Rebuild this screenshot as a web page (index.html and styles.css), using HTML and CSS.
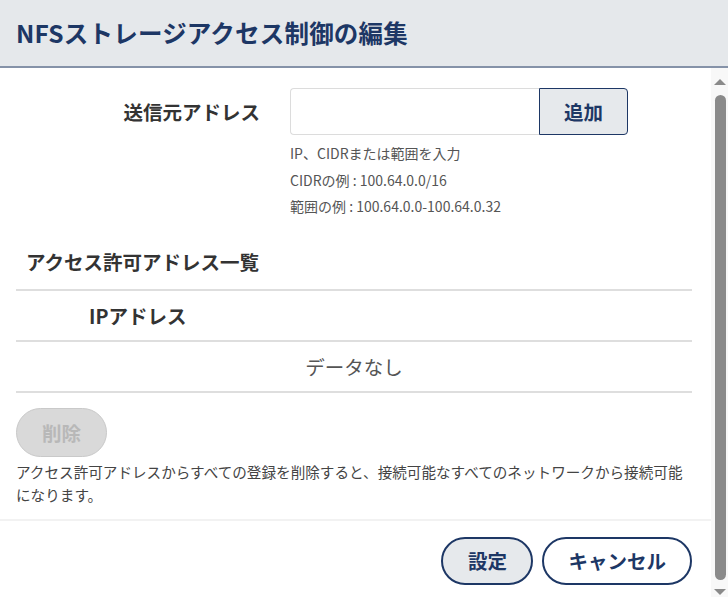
FILE: index.html
```html
<!DOCTYPE html>
<html lang="ja">
<head>
    <meta charset="UTF-8">
    <meta name="viewport" content="width=device-width, initial-scale=1.0">
    <title>NFSストレージアクセス制御の編集</title>
    <link rel="stylesheet" href="styles.css">
</head>
<body>
    <div class="dialog">
        <header class="dialog-header">
            <h1 class="dialog-title">NFSストレージアクセス制御の編集</h1>
        </header>

        <div class="dialog-main">
            <div class="dialog-scroll">
                <div class="dialog-body">
                    <div class="form-row">
                        <label class="form-label" for="srcAddr">送信元アドレス</label>
                        <div class="form-field">
                            <div class="input-group">
                                <input type="text" class="text-input" id="srcAddr">
                                <button class="btn-add">追加</button>
                            </div>
                            <ul class="help-list">
                                <li>IP、CIDRまたは範囲を入力</li>
                                <li>CIDRの例 : 100.64.0.0/16</li>
                                <li>範囲の例 : 100.64.0.0-100.64.0.32</li>
                            </ul>
                        </div>
                    </div>

                    <h2 class="section-title">アクセス許可アドレス一覧</h2>

                    <table class="addr-table">
                        <thead>
                            <tr><th>IPアドレス</th></tr>
                        </thead>
                        <tbody>
                            <tr><td class="empty">データなし</td></tr>
                        </tbody>
                    </table>

                    <button class="btn-delete" disabled>削除</button>
                    <p class="note">アクセス許可アドレスからすべての登録を削除すると、接続可能なすべてのネットワークから接続可能になります。</p>
                </div>

                <div class="dialog-footer">
                    <button class="btn-pill btn-primary">設定</button>
                    <button class="btn-pill">キャンセル</button>
                </div>
            </div>

            <!-- scrollbar of the dialog body -->
            <div class="scrollbar">
                <span class="scroll-arrow scroll-arrow-up"></span>
                <span class="scroll-thumb"></span>
                <span class="scroll-arrow scroll-arrow-down"></span>
            </div>
        </div>
    </div>
</body>
</html>
```

FILE: styles.css
```css
* {
    margin: 0;
    padding: 0;
    box-sizing: border-box;
}

body {
    font-family: 'Noto Sans CJK JP', 'Noto Sans', sans-serif;
    color: #333;
    background: #fff;
    height: 100vh;
    overflow: hidden;
}

.dialog {
    height: 100%;
    display: flex;
    flex-direction: column;
}

.dialog-header {
    height: 68px;
    flex-shrink: 0;
    background-color: #e5e8eb;
    border-bottom: 2px solid #8592a8;
    display: flex;
    align-items: center;
    padding: 0 16px 2px;
}

.dialog-title {
    font-size: 24.5px;
    font-weight: bold;
    color: #1d3765;
    letter-spacing: 0.2px;
}

.dialog-main {
    flex: 1;
    min-height: 0;
    display: flex;
}

.dialog-scroll {
    flex: 1;
    overflow: hidden;
}

/* Scrollbar */
.scrollbar {
    width: 17px;
    flex-shrink: 0;
    background-color: #f8f8f8;
    display: flex;
    flex-direction: column;
    align-items: center;
    padding: 11px 0 2px 1px;
}

.scroll-arrow {
    width: 0;
    height: 0;
    border-left: 6.5px solid transparent;
    border-right: 6.5px solid transparent;
}

.scroll-arrow-up {
    border-bottom: 6px solid #8a8a8a;
}

.scroll-arrow-down {
    border-top: 6px solid #8a8a8a;
}

.scroll-thumb {
    flex: 1;
    width: 11px;
    margin: 10px 0 9px;
    background-color: #8a8a8a;
    border-radius: 6px;
}

.dialog-body {
    padding: 20px 19px 0 16px;
}

.form-row {
    display: grid;
    grid-template-columns: 244px 1fr;
    column-gap: 30px;
}

.form-label {
    text-align: right;
    font-size: 19.5px;
    font-weight: bold;
    line-height: 47px;
    color: #333;
}

.input-group {
    display: flex;
    height: 47px;
}

.text-input {
    width: 249px;
    height: 100%;
    border: 1px solid #dcdcdc;
    border-right: none;
    border-radius: 4px 0 0 4px;
    outline: none;
    font-family: inherit;
    font-size: 16px;
    padding: 0 10px;
}

.btn-add {
    width: 89px;
    height: 100%;
    background-color: #e6e9ec;
    border: 1px solid #1d3765;
    border-radius: 0 4px 4px 0;
    font-family: inherit;
    font-size: 19.5px;
    font-weight: bold;
    color: #1d3765;
}

.help-list {
    list-style: none;
    margin-top: 5px;
    font-size: 14px;
    line-height: 26.5px;
    color: #555;
}

.section-title {
    margin-top: 28px;
    padding-left: 10px;
    font-size: 19.5px;
    font-weight: bold;
    line-height: 28px;
    color: #333;
}

.addr-table {
    width: 100%;
    margin-top: 13px;
    border-collapse: collapse;
}

.addr-table th,
.addr-table td {
    height: 51px;
    border-top: 2px solid #dedede;
    border-bottom: 2px solid #dedede;
    font-size: 19.5px;
}

.addr-table th {
    text-align: left;
    padding-left: 73px;
    font-weight: bold;
    color: #333;
}

.addr-table .empty {
    text-align: center;
    font-weight: normal;
    color: #555;
}

.btn-delete {
    display: block;
    margin-top: 15px;
    width: 91px;
    height: 49px;
    background-color: #d9d9d9;
    border: 1px solid #c9c9c9;
    border-radius: 25px;
    font-family: inherit;
    font-size: 19.5px;
    font-weight: bold;
    color: #b8b8b8;
}

.note {
    margin-top: 3px;
    font-size: 14.6px;
    line-height: 23px;
    color: #444;
}

.dialog-footer {
    margin-top: 13px;
    border-top: 2px solid #f2f2f2;
    padding: 16px 19px 22px 0;
    display: flex;
    justify-content: flex-end;
    gap: 9px;
}

.btn-pill {
    height: 48px;
    padding: 0 24px;
    background-color: #fff;
    border: 2px solid #1d3765;
    border-radius: 24px;
    font-family: inherit;
    font-size: 19.5px;
    font-weight: bold;
    color: #1d3765;
}

.btn-primary {
    width: 92px;
    padding: 0;
    background-color: #e6e9ec;
}
```
